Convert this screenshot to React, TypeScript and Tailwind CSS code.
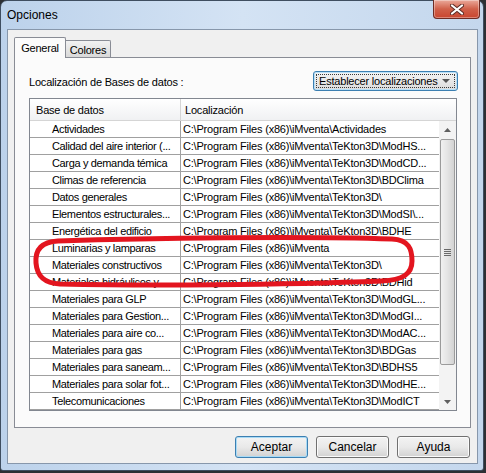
import React from 'react';

const rows: [string, string][] = [
  ['Actividades', 'C:\\Program Files (x86)\\iMventa\\Actividades'],
  ['Calidad del aire interior (...', 'C:\\Program Files (x86)\\iMventa\\TeKton3D\\ModHS...'],
  ['Carga y demanda témica', 'C:\\Program Files (x86)\\iMventa\\TeKton3D\\ModCD...'],
  ['Climas de referencia', 'C:\\Program Files (x86)\\iMventa\\TeKton3D\\BDClima'],
  ['Datos generales', 'C:\\Program Files (x86)\\iMventa\\TeKton3D\\'],
  ['Elementos estructurales...', 'C:\\Program Files (x86)\\iMventa\\TeKton3D\\ModSI\\...'],
  ['Energética del edificio', 'C:\\Program Files (x86)\\iMventa\\TeKton3D\\BDHE'],
  ['Luminarias y lamparas', 'C:\\Program Files (x86)\\iMventa'],
  ['Materiales constructivos', 'C:\\Program Files (x86)\\iMventa\\TeKton3D\\'],
  ['Materiales hidráulicos y...', 'C:\\Program Files (x86)\\iMventa\\TeKton3D\\BDHid'],
  ['Materiales para GLP', 'C:\\Program Files (x86)\\iMventa\\TeKton3D\\ModGL...'],
  ['Materiales para Gestion...', 'C:\\Program Files (x86)\\iMventa\\TeKton3D\\ModGI...'],
  ['Materiales para aire co...', 'C:\\Program Files (x86)\\iMventa\\TeKton3D\\ModAC...'],
  ['Materiales para gas', 'C:\\Program Files (x86)\\iMventa\\TeKton3D\\BDGas'],
  ['Materiales para saneam...', 'C:\\Program Files (x86)\\iMventa\\TeKton3D\\BDHS5'],
  ['Materiales para solar fot...', 'C:\\Program Files (x86)\\iMventa\\TeKton3D\\ModHE...'],
  ['Telecomunicaciones', 'C:\\Program Files (x86)\\iMventa\\TeKton3D\\ModICT'],
];

const CloseButton = () => (
  <div className="-mt-px -mr-[2px] flex h-[19px] w-[47px] items-center justify-center rounded-b-[4px] border border-t-0 border-[#6e2c24] bg-gradient-to-b from-[#eaa99b] via-[#d0604a] to-[#c9452f] shadow-[inset_0_0_0_1px_rgba(255,255,255,0.35)]">
    <svg width="14" height="11" viewBox="0 0 14 11">
      <path d="M2 1.5 L12 9.5 M12 1.5 L2 9.5" stroke="#5a2a24" strokeWidth="4" strokeLinecap="round" />
      <path d="M2 1.5 L12 9.5 M12 1.5 L2 9.5" stroke="#ffffff" strokeWidth="2.2" strokeLinecap="round" />
    </svg>
  </div>
);

const DialogButton = ({ label, primary }: { label: string; primary?: boolean }) => (
  <div
    className={`flex h-[22px] w-[73px] items-center justify-center rounded-[3px] border bg-gradient-to-b from-[#f3f3f3] via-[#e9e9e9] to-[#d2d2d2] text-[12px] ${
      primary ? 'border-[#3c7fb1] shadow-[inset_0_0_0_1px_#a9dbf6]' : 'border-[#707070] shadow-[inset_0_0_0_1px_#fbfbfb]'
    }`}
  >
    {label}
  </div>
);

const Scrollbar = () => (
  <div className="flex w-[17px] flex-col bg-[#f3f3f3]">
    <div className="flex h-[17px] items-center justify-center">
      <svg width="7" height="4" viewBox="0 0 7 4">
        <path d="M0 4 L3.5 0 L7 4 Z" fill="#5f5f5f" />
      </svg>
    </div>
    <div className="flex-1 px-[1px] pt-[1px]">
      <div className="flex h-[226px] items-center justify-center rounded-[2px] border border-[#9b9b9b] bg-gradient-to-r from-[#f1f1f1] via-[#e4e4e4] to-[#d3d3d3]">
        <div className="flex flex-col gap-[1px]">
          <div className="h-px w-[7px] bg-[#6a6a6a]" />
          <div className="h-px w-[7px] bg-[#6a6a6a]" />
          <div className="h-px w-[7px] bg-[#6a6a6a]" />
          <div className="h-px w-[7px] bg-[#6a6a6a]" />
        </div>
      </div>
    </div>
    <div className="flex h-[17px] items-center justify-center">
      <svg width="7" height="4" viewBox="0 0 7 4">
        <path d="M0 0 L7 0 L3.5 4 Z" fill="#5f5f5f" />
      </svg>
    </div>
  </div>
);

export default function App() {
  return (
    <div className="relative h-[473px] w-[486px] overflow-hidden bg-[#2d3034] font-['Liberation_Sans',Arial,sans-serif] text-black">
      <div className="flex h-[471px] w-[484px] flex-col rounded-t-[7px] rounded-b-[3px] border border-[#3f4e60] bg-gradient-to-r from-[#bcd2eb] via-[#d4e3f4] to-[#c4d7ed] pl-[6px] pr-[5px] pb-[6px]">
        {/* Title bar */}
        <div className="flex h-[28px] items-start justify-between">
          <span className="pt-[7px] text-[12px] leading-[15px]">Opciones</span>
          <CloseButton />
        </div>

        {/* Client area */}
        <div className="flex flex-1 flex-col border border-[#8797ab] bg-[#f0f0f0] px-[6px] pt-[7px]">
          {/* Tabs */}
          <div className="relative z-10 flex h-[20px] items-end">
            <div className="-mb-px flex h-[21px] w-[52px] items-start justify-center rounded-t-[2px] border border-b-0 border-[#898c95] bg-[#fbfbfb] pt-[3px] text-[11px] leading-[14px] tracking-[-0.2px]">
              General
            </div>
            <div className="flex h-[17px] w-[45px] items-start justify-center rounded-tr-[2px] border border-l-0 border-b-0 border-[#898c95] bg-gradient-to-b from-[#f2f2f2] to-[#d9d9d9] pt-[2px] text-[11px] leading-[14px] tracking-[-0.2px]">
              Colores
            </div>
          </div>

          {/* Tab page */}
          <div className="flex h-[371px] w-[457px] flex-col border border-[#898c95] bg-[#fbfbfb] pl-[14px] pr-[13px]">
            <div className="mt-[13px] flex items-center justify-between">
              <span className="pt-[3px] text-[11px] tracking-[-0.2px]">Localización de Bases de datos :</span>
              <div className="-mr-px flex h-[20px] w-[145px] rounded-[3px] border border-[#3c7fb1] bg-gradient-to-b from-[#f4f4f4] to-[#dcdcdc] shadow-[inset_0_0_0_1px_#b8e0f8]">
                <div className="m-[2px] flex flex-1 items-center justify-between border border-dotted border-[#3a3a3a] pl-[2px] pr-[4px]">
                  <span className="text-[11px] leading-[14px] tracking-[-0.2px]">Establecer localizaciones</span>
                  <svg width="8" height="4" viewBox="0 0 8 4">
                    <path d="M0 0 L8 0 L4 4 Z" fill="#555555" />
                  </svg>
                </div>
              </div>
            </div>

            {/* Grid */}
            <div className="mt-[7px] flex flex-col border border-[#828790] bg-white text-[11px] leading-[16px] tracking-[-0.2px]">
              <div className="flex h-[22px] border-b border-[#d5d5d5] bg-gradient-to-b from-[#ffffff] to-[#f0f1f3]">
                <div className="flex w-[151px] items-center border-r border-[#d5d5d5] pl-[6px]">Base de datos</div>
                <div className="flex flex-1 items-center pl-[4px]">Localización</div>
              </div>
              <div className="flex">
                <div className="flex flex-1 flex-col">
                  {rows.map(([name, path]) => (
                    <div key={name} className="flex h-[17px] border-b border-[#a0a0a0]">
                      <div className="w-[151px] overflow-hidden whitespace-nowrap border-r border-[#a0a0a0] pl-[22px] tracking-[-0.35px]">{name}</div>
                      <div className="flex-1 overflow-hidden whitespace-nowrap pl-[2px]">{path}</div>
                    </div>
                  ))}
                </div>
                <Scrollbar />
              </div>
            </div>
          </div>

          {/* Buttons */}
          <div className="mt-[8px] flex justify-end gap-[8px] pr-[1px]">
            <DialogButton label="Aceptar" primary />
            <DialogButton label="Cancelar" />
            <DialogButton label="Ayuda" />
          </div>
        </div>
      </div>

      {/* red hand-drawn annotation */}
      <svg className="pointer-events-none absolute left-0 top-0" width="486" height="473" viewBox="0 0 486 473">
        <path
          d="M58 241 C150 238 300 236 392 239 C409 240 412 249 412 261 C412 274 403 280 382 281 C280 285 150 286 60 284 C44 283 37 276 36 263 C35 249 42 242 58 241 Z"
          fill="none"
          stroke="#e3151f"
          strokeWidth="5"
        />
      </svg>
    </div>
  );
}
